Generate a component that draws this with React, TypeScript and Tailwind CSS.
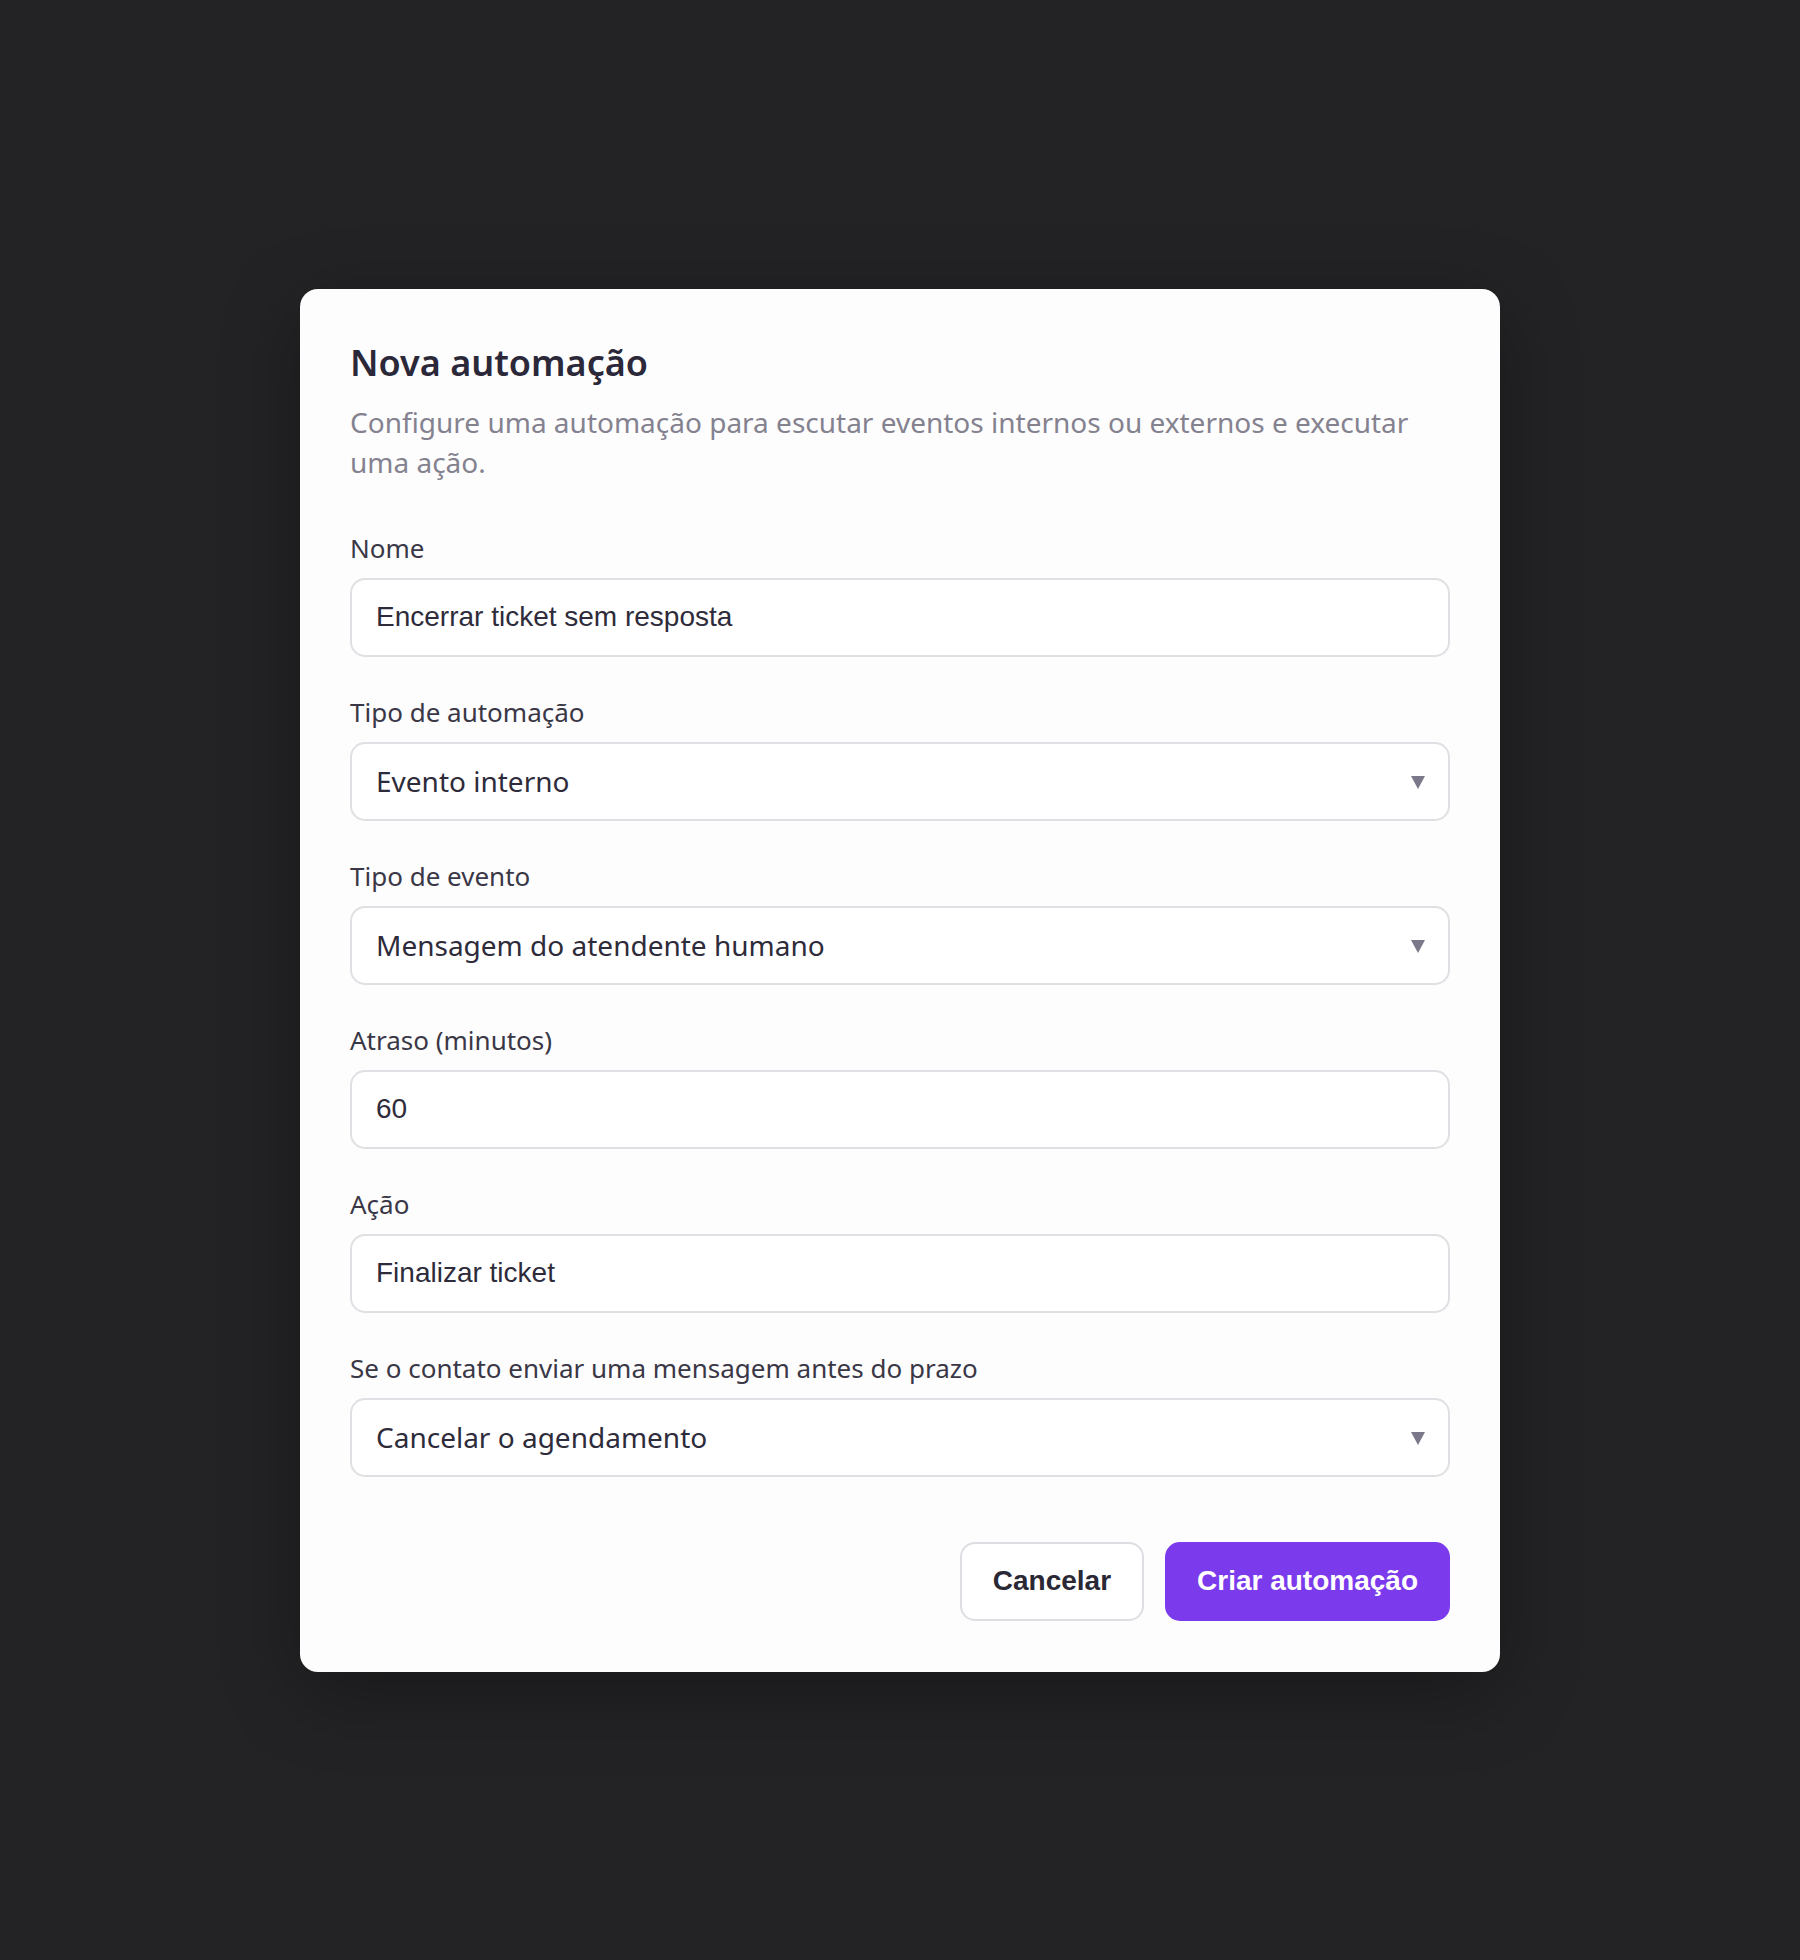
import React from "react";

const sans = "font-['Noto_Sans',sans-serif]";
const arial = "font-['Liberation_Sans',Arial,sans-serif]";

function Label({ children }: { children: React.ReactNode }) {
  return (
    <label className={`${sans} block text-[26px] leading-[36px] text-[#3a3746] mb-[12px]`}>
      {children}
    </label>
  );
}

function TextField({ label, value }: { label: string; value: string }) {
  return (
    <div>
      <Label>{label}</Label>
      <div
        className={`${arial} h-[79px] flex items-center rounded-[15px] border-2 border-[#e0dfe3] bg-white px-[24px] text-[28px] text-[#2e2b3a]`}
      >
        {value}
      </div>
    </div>
  );
}

function SelectField({ label, value }: { label: string; value: string }) {
  return (
    <div>
      <Label>{label}</Label>
      <div
        className={`${sans} h-[79px] flex items-center justify-between rounded-[15px] border-2 border-[#e0dfe3] bg-white pl-[24px] pr-[23px] text-[28px] text-[#2e2b3a]`}
      >
        <span>{value}</span>
        <svg width="14" height="13" viewBox="0 0 14 13" className="mt-[2px]">
          <polygon points="0,0 14,0 7,13" fill="#7b7889" />
        </svg>
      </div>
    </div>
  );
}

export default function App() {
  return (
    <div className="min-h-[1960px] w-full bg-[#232325] flex items-center justify-center">
      <div className="w-[1200px] rounded-[18px] bg-[#fdfdfe] px-[50px] pt-[50px] pb-[51px] shadow-[0_20px_80px_rgba(0,0,0,0.3)]">
        <h2 className={`${sans} text-[36px] leading-[48px] font-semibold text-[#2b2839]`}>
          Nova automação
        </h2>
        <p className={`${sans} mt-[15px] text-[28px] leading-[40px] text-[#858290]`}>
          Configure uma automação para escutar eventos internos ou externos e executar uma ação.
        </p>

        <div className="mt-[48px] flex flex-col gap-[37px]">
          <TextField label="Nome" value="Encerrar ticket sem resposta" />
          <SelectField label="Tipo de automação" value="Evento interno" />
          <SelectField label="Tipo de evento" value="Mensagem do atendente humano" />
          <TextField label="Atraso (minutos)" value="60" />
          <TextField label="Ação" value="Finalizar ticket" />
          <SelectField
            label="Se o contato enviar uma mensagem antes do prazo"
            value="Cancelar o agendamento"
          />
        </div>

        <div className="mt-[65px] flex justify-end gap-[21px]">
          <button
            type="button"
            className={`${arial} h-[79px] rounded-[15px] border-2 border-[#dedde2] bg-white px-[31px] text-[28px] font-bold text-[#2b2836]`}
          >
            Cancelar
          </button>
          <button
            type="button"
            className={`${arial} h-[79px] rounded-[15px] bg-[#7c3aed] px-[32px] text-[28px] font-bold text-white`}
          >
            Criar automação
          </button>
        </div>
      </div>
    </div>
  );
}
